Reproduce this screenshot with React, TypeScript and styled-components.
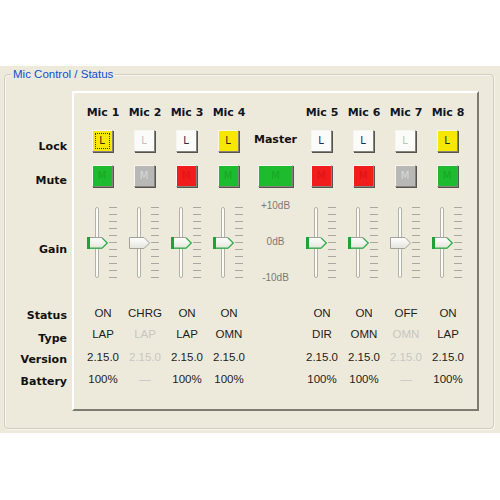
import React, { useId } from 'react';
import styled, { createGlobalStyle, css } from 'styled-components';

type Tone = 'yellow' | 'white' | 'green' | 'red' | 'gray';

interface Mic {
  name: string;
  lock: Tone;
  lockDim?: boolean;
  focus?: boolean;
  mute: Tone;
  active: boolean;
  status: string;
  type: string;
  version: string;
  battery: string;
}

const mics: Mic[] = [
  { name: 'Mic 1', lock: 'yellow', focus: true, mute: 'green', active: true, status: 'ON', type: 'LAP', version: '2.15.0', battery: '100%' },
  { name: 'Mic 2', lock: 'white', lockDim: true, mute: 'gray', active: false, status: 'CHRG', type: 'LAP', version: '2.15.0', battery: '—' },
  { name: 'Mic 3', lock: 'white', mute: 'red', active: true, status: 'ON', type: 'LAP', version: '2.15.0', battery: '100%' },
  { name: 'Mic 4', lock: 'yellow', mute: 'green', active: true, status: 'ON', type: 'OMN', version: '2.15.0', battery: '100%' },
  { name: 'Mic 5', lock: 'white', mute: 'red', active: true, status: 'ON', type: 'DIR', version: '2.15.0', battery: '100%' },
  { name: 'Mic 6', lock: 'white', mute: 'red', active: true, status: 'ON', type: 'OMN', version: '2.15.0', battery: '100%' },
  { name: 'Mic 7', lock: 'white', lockDim: true, mute: 'gray', active: false, status: 'OFF', type: 'OMN', version: '2.15.0', battery: '—' },
  { name: 'Mic 8', lock: 'yellow', mute: 'green', active: true, status: 'ON', type: 'LAP', version: '2.15.0', battery: '100%' },
];

const tones: Record<Tone, { bg: string; ink: string }> = {
  yellow: { bg: '#f6e800', ink: '#2a2a10' },
  white: { bg: '#fbfbfa', ink: '#232a50' },
  green: { bg: '#1fbb2e', ink: '#17a526' },
  red: { bg: '#f11c1c', ink: '#dc1414' },
  gray: { bg: '#b8b8b6', ink: '#d8d8d6' },
};

const GlobalStyle = createGlobalStyle`
  body {
    margin: 0;
    background: #ffffff;
    font-family: "Liberation Sans", Arial, sans-serif;
  }
`;

const Page = styled.div`
  padding-top: 66px;
`;

const Section = styled.div`
  height: 367px;
  box-sizing: border-box;
  padding-top: 8px;
  background: #eeeadb;
`;

const GroupBox = styled.div`
  position: relative;
  height: 355px;
  box-sizing: border-box;
  margin: 0 6px 0 4px;
  padding: 16px 14px 0 0;
  border: 1px solid #d3cfbc;
  border-radius: 4px;
  box-shadow: inset 1px 1px 0 #f8f6ee, 1px 1px 0 #f8f6ee;
  display: flex;
  gap: 5px;
`;

const Title = styled.div`
  position: absolute;
  top: -8px;
  left: 6px;
  padding: 0 2px;
  background: #eeeadb;
  color: #0a4fd8;
  font-size: 11.5px;
  line-height: 14px;
`;

const labelFont = css`
  font-family: "DejaVu Sans", Verdana, sans-serif;
  font-weight: bold;
  font-size: 11px;
  color: #111111;
`;

const LabelColumn = styled.div`
  width: 62px;
  padding-top: 9px;
  display: grid;
  grid-template-rows: 28px 36px 32px 106px 26px 20px 22px 22px;
  align-content: start;
`;

const RowLabel = styled.div`
  ${labelFont};
  display: flex;
  align-items: center;
  justify-content: flex-end;
  line-height: 1;
`;

const Panel = styled.div`
  width: 407px;
  height: 320px;
  box-sizing: border-box;
  border: 2px solid;
  border-color: #ffffff #7d7a6f #7d7a6f #ffffff;
  padding: 7px 8px 0 8px;
  display: grid;
  grid-template-columns: repeat(4, 42px) 51px repeat(4, 42px);
  grid-template-rows: 24px 34px 35px 98px 12px 20px 22px 24px 20px;
`;

const Cell = styled.div`
  display: flex;
  align-items: center;
  justify-content: center;
`;

const Spacer = styled.div`
  grid-column: 1 / -1;
`;

const Heading = styled(Cell)`
  ${labelFont};
  color: #0f1626;
  white-space: nowrap;
`;

const MasterLabel = styled(Cell)`
  ${labelFont};
  padding-bottom: 4px;
`;

const Value = styled(Cell)<{ $dim?: boolean }>`
  font-size: 11.5px;
  color: ${({ $dim }) => ($dim ? '#c6c6c3' : '#1d1d1d')};
  white-space: nowrap;
`;

const Key = styled.button<{ $tone: Tone; $dim?: boolean; $focus?: boolean; $wide?: boolean }>`
  width: ${({ $wide }) => ($wide ? '35px' : '21px')};
  height: 22px;
  padding: 0;
  box-sizing: border-box;
  border: 1px solid;
  border-color: #f6f5ef #85837a #85837a #f6f5ef;
  box-shadow: 1px 1px 0 #55544e;
  background: ${({ $tone }) => tones[$tone].bg};
  color: ${({ $tone, $dim }) => ($dim ? '#c2c2c0' : tones[$tone].ink)};
  font-family: "DejaVu Sans", Verdana, sans-serif;
  font-size: 10px;
  line-height: 1;
  outline: ${({ $focus }) => ($focus ? '1px dotted #3a3a20' : 'none')};
  outline-offset: -4px;
  transform: translateX(${({ $wide }) => ($wide ? '0' : '-1px')});
`;

const Scale = styled.div`
  display: flex;
  flex-direction: column;
  justify-content: space-between;
  align-items: center;
  padding: 7px 0 7px;
  font-size: 10px;
  line-height: 12px;
  color: #7a7a76;
`;

const Slider: React.FC<{ active: boolean }> = ({ active }) => {
  const id = useId();
  const ticks = Array.from({ length: 11 }, (_, i) => 14.5 + i * 7);
  return (
    <svg width="42" height="98" viewBox="0 0 42 98">
      <defs>
        <linearGradient id={id} x1="0" y1="0" x2="0" y2="1">
          <stop offset="0" stopColor="#ffffff" />
          <stop offset="1" stopColor="#e4e3dc" />
        </linearGradient>
      </defs>
      <rect x="13.5" y="14.5" width="3" height="70" rx="1.5" fill="#fbfbf8" stroke="#b4b2a8" />
      {ticks.map((y) => (
        <line key={y} x1="27" x2="35" y1={y} y2={y} stroke="#aaa89d" />
      ))}
      <path d="M5.5 44.5 H20 L25.5 50 L20 55.5 H5.5 Z" fill={`url(#${id})`} stroke="#a3a198" />
      {active && (
        <>
          <path d="M6 55.2 H20 L25.2 50 L20 44.8" fill="none" stroke="#2cb447" strokeWidth="1.2" />
          <rect x="5" y="44" width="3" height="12" fill="#1fa338" />
        </>
      )}
    </svg>
  );
};

const columns = [...mics.slice(0, 4), null, ...mics.slice(4)];

export default function App() {
  return (
    <Page>
      <GlobalStyle />
      <Section>
        <GroupBox>
          <Title>Mic Control / Status</Title>
          <LabelColumn>
            <div />
            <RowLabel>Lock</RowLabel>
            <RowLabel>Mute</RowLabel>
            <RowLabel>Gain</RowLabel>
            <RowLabel>Status</RowLabel>
            <RowLabel>Type</RowLabel>
            <RowLabel>Version</RowLabel>
            <RowLabel>Battery</RowLabel>
          </LabelColumn>
          <Panel>
            {columns.map((m, i) => (
              <Heading key={`h${i}`}>{m ? m.name : ''}</Heading>
            ))}
            {columns.map((m, i) =>
              m ? (
                <Cell key={`l${i}`}>
                  <Key $tone={m.lock} $dim={m.lockDim} $focus={m.focus}>L</Key>
                </Cell>
              ) : (
                <MasterLabel key={`l${i}`}>Master</MasterLabel>
              ),
            )}
            {columns.map((m, i) => (
              <Cell key={`m${i}`}>
                {m ? <Key $tone={m.mute}>M</Key> : <Key $tone="green" $wide>M</Key>}
              </Cell>
            ))}
            {columns.map((m, i) =>
              m ? (
                <Cell key={`g${i}`}>
                  <Slider active={m.active} />
                </Cell>
              ) : (
                <Scale key={`g${i}`}>
                  <span>+10dB</span>
                  <span>0dB</span>
                  <span>-10dB</span>
                </Scale>
              ),
            )}
            <Spacer />
            {columns.map((m, i) => (
              <Value key={`s${i}`}>{m ? m.status : ''}</Value>
            ))}
            {columns.map((m, i) => (
              <Value key={`t${i}`} $dim={m ? !m.active : false}>{m ? m.type : ''}</Value>
            ))}
            {columns.map((m, i) => (
              <Value key={`v${i}`} $dim={m ? !m.active : false}>{m ? m.version : ''}</Value>
            ))}
            {columns.map((m, i) => (
              <Value key={`b${i}`} $dim={m ? !m.active : false}>{m ? m.battery : ''}</Value>
            ))}
          </Panel>
        </GroupBox>
      </Section>
    </Page>
  );
}
